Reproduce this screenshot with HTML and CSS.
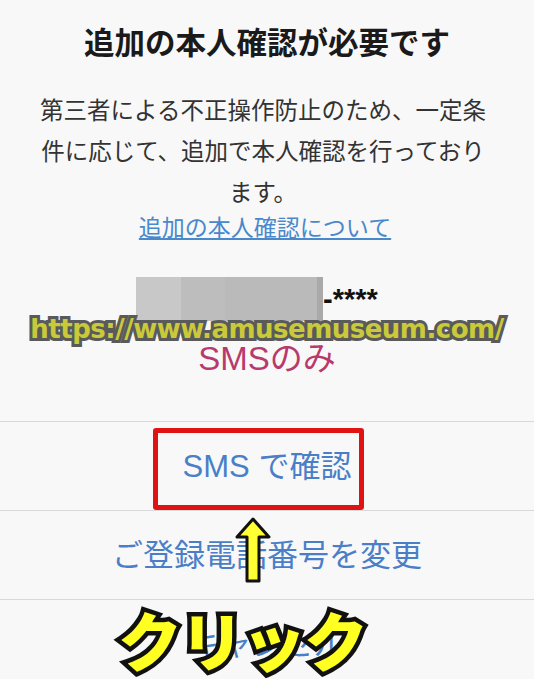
FILE: index.html
```html
<!DOCTYPE html>
<html lang="ja">
<head>
  <meta charset="UTF-8" />
  <meta name="viewport" content="width=device-width, initial-scale=1.0"/>
  <title>追加の本人確認</title>
  <link rel="stylesheet" href="styles.css">
</head>
<body>

  <div class="sheet">
    <h1>追加の本人確認が必要です</h1>
    <p class="lead">第三者による不正操作防止のため、一定条件に応じて、追加で本人確認を行っております。</p>
    <a class="about" href="#">追加の本人確認について</a>

    <div class="phone">
      <span class="masked"></span>
      <span class="tail">-****</span>
    </div>
    <div class="only">SMSのみ</div>

    <div class="actions">
      <a class="action" href="#">SMS で確認</a>
      <a class="action" href="#">ご登録電話番号を変更</a>
      <a class="action" href="#">キャンセル</a>
    </div>

    <!-- annotations drawn over the screenshot -->
    <div class="watermark">https://www.amusemuseum.com/</div>
    <div class="highlight"></div>
    <svg class="arrow" width="40" height="68" viewBox="0 0 40 68">
      <path d="M20 2 L36 20 L26 20 L26 64 L14 64 L14 20 L4 20 Z"
            fill="#ffff33" stroke="#111" stroke-width="3" stroke-linejoin="round"/>
    </svg>
    <div class="click">クリック</div>
  </div>

</body>
</html>
```

FILE: styles.css
```css
* {
  box-sizing: border-box;
}

body {
  margin: 0;
  background: #f8f8f8;
  font-family: "Noto Sans CJK JP", "Noto Sans", sans-serif;
  color: #333;
}

.sheet {
  position: relative;
  width: 534px;
  height: 679px;
  overflow: hidden;
  padding-top: 19px;
  text-align: center;
}

h1 {
  margin: 0;
  font-size: 30.5px;
  line-height: 44px;
  font-weight: 700;
  color: #1a1a1a;
}

.lead {
  margin: 26px 0 0;
  padding: 0 42px 0 34px;
  font-size: 23.5px;
  line-height: 41px;
  color: #333;
}

.about {
  display: inline-block;
  font-size: 23px;
  line-height: 28px;
  color: #4a88cc;
  text-decoration: underline;
  margin-left: -4px;
}

.phone {
  display: flex;
  justify-content: center;
  align-items: center;
  margin-top: 36px;
  padding-right: 20px;
  height: 44px;
}

.masked {
  width: 187px;
  height: 44px;
  background: linear-gradient(to right, #c8c8c8 0 45px, #bdbdbd 45px 89px, #bababa 89px 181px, #a9a9a9 181px);
}

.tail {
  font-family: "Liberation Sans", sans-serif;
  font-size: 29px;
  font-weight: 700;
  color: #111;
  line-height: 44px;
}

.only {
  margin-top: 19px;
  font-family: "Liberation Sans", "Noto Sans CJK JP", sans-serif;
  font-size: 33px;
  line-height: 38px;
  color: #b83a6c;
}

.actions {
  margin-top: 43px;
}

.action {
  display: block;
  height: 89px;
  line-height: 89px;
  border-top: 1px solid #d8d8d8;
  font-family: "Liberation Sans", "Noto Sans CJK JP", sans-serif;
  font-size: 31px;
  color: #4a7fc8;
  text-decoration: none;
}

.watermark {
  position: absolute;
  left: 0;
  right: 0;
  top: 314px;
  font-family: "DejaVu Sans", sans-serif;
  font-size: 26px;
  font-weight: 700;
  letter-spacing: -0.5px;
  color: #c9c93a;
  -webkit-text-stroke: 6px #5a5a5a;
  paint-order: stroke fill;
}

.highlight {
  position: absolute;
  left: 153px;
  top: 428px;
  width: 211px;
  height: 82px;
  border: 5px solid #e01313;
  border-radius: 3px;
}

.arrow {
  position: absolute;
  left: 233px;
  top: 517px;
}

.click {
  position: absolute;
  left: 118px;
  top: 598px;
  font-size: 64px;
  line-height: 80px;
  font-weight: 900;
  letter-spacing: -2px;
  color: #ffff22;
  -webkit-text-stroke: 9px #111;
  paint-order: stroke fill;
}
```
